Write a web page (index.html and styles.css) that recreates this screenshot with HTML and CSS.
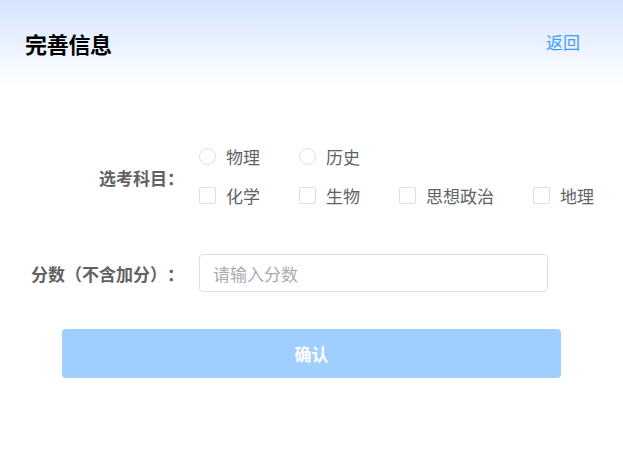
FILE: index.html
```html
<!DOCTYPE html>
<html lang="zh-CN">
<head>
<meta charset="utf-8">
<title>完善信息</title>
<link rel="stylesheet" href="styles.css">
</head>
<body>
<header class="top">
  <h1 class="title">完善信息</h1>
  <a class="back">返回</a>
</header>
<main class="form">
  <div class="item subjects">
    <label class="label">选考科目：</label>
    <div class="content">
      <div class="opt-row">
        <span class="opt"><span class="radio"></span><span class="txt">物理</span></span>
        <span class="opt"><span class="radio"></span><span class="txt">历史</span></span>
      </div>
      <div class="opt-row">
        <span class="opt"><span class="check"></span><span class="txt">化学</span></span>
        <span class="opt"><span class="check"></span><span class="txt">生物</span></span>
        <span class="opt"><span class="check"></span><span class="txt">思想政治</span></span>
        <span class="opt"><span class="check"></span><span class="txt">地理</span></span>
      </div>
    </div>
  </div>
  <div class="item score">
    <label class="label">分数（不含加分）：</label>
    <div class="content">
      <input class="input" type="text" placeholder="请输入分数">
    </div>
  </div>
  <button class="submit">确认</button>
</main>
</body>
</html>
```
FILE: styles.css
```css
* { box-sizing: border-box; }
html, body { margin: 0; padding: 0; background: #fff; }
body {
  font-family: "Noto Sans CJK SC", "Noto Sans", sans-serif;
  width: 623px;
  height: 467px;
  overflow: hidden;
  text-spacing-trim: space-all;
}
.top {
  height: 86px;
  display: flex;
  align-items: center;
  justify-content: space-between;
  padding: 0 43px 0 25px;
  background: linear-gradient(to bottom, #d4e4fe 0%, #eef4ff 60%, #ffffff 100%);
}
.title {
  margin: 0;
  font-size: 22px;
  font-weight: 700;
  color: #000;
  line-height: 1;
  letter-spacing: -0.3px;
}
.back {
  font-size: 17px;
  color: #409eff;
  line-height: 1;
  margin-top: -3px;
}
.form {
  padding: 51px 0 0 30px;
}
.item {
  display: grid;
  grid-template-columns: 154px max-content;
  column-gap: 15px;
  align-items: center;
}
.label {
  font-size: 17px;
  font-weight: 700;
  color: #606266;
  text-align: right;
  white-space: nowrap;
  line-height: 1;
}
.subjects .label { margin-top: 3px; }
.opt-row {
  display: flex;
  height: 39px;
  align-items: center;
  white-space: nowrap;
}
.opt {
  display: inline-flex;
  align-items: center;
  flex: none;
  margin-right: 39px;
  font-size: 17px;
  color: #606266;
  line-height: 1;
  white-space: nowrap;
}
.radio, .check {
  width: 17px;
  height: 17px;
  border: 1px solid #dcdfe6;
  background: #fff;
  margin-right: 10px;
  flex: none;
}
.radio { border-radius: 50%; }
.check { border-radius: 2px; }
.score { margin-top: 39px; }
.input {
  width: 349px;
  height: 38px;
  border: 1px solid #dcdfe6;
  border-radius: 4px;
  padding: 0 13px;
  font-family: inherit;
  font-size: 17px;
  color: #606266;
  outline: none;
}
.input::placeholder { color: #a8abb2; }
.submit {
  display: block;
  margin: 37px 0 0 32px;
  width: 499px;
  height: 49px;
  border: none;
  border-radius: 4px;
  background: #a0cfff;
  color: #fff;
  font-family: inherit;
  font-size: 17px;
  font-weight: 700;
}
```
